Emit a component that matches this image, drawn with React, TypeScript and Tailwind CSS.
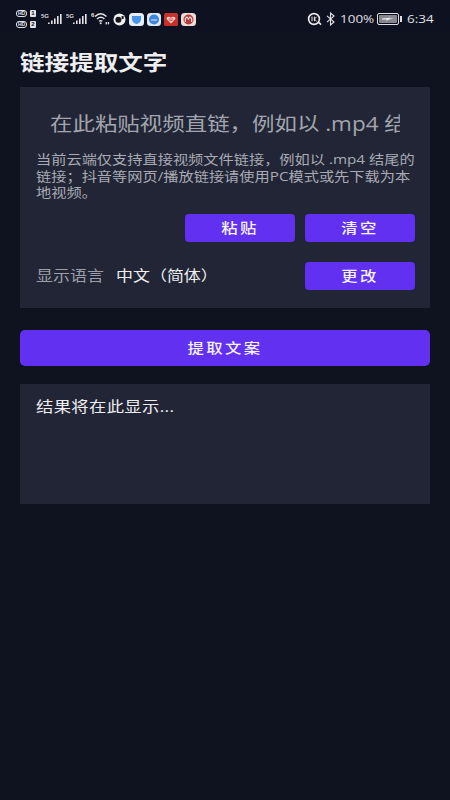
import { useState } from 'react';

const FONT = "font-['Open_Sans','Noto_Sans_CJK_SC',sans-serif]";
// the screenshot is stretched sideways, so the text is too
const WIDE = 'origin-left scale-x-[1.17]';

const HdSim = ({ n }: { n: string }) => (
  <div className="flex items-center gap-[3px] h-[7px]">
    <span className="h-[7px] w-[11px] rounded-[3px] border border-[#e4e4e8] text-[5px] leading-[5px] font-bold text-center text-[#e4e4e8] font-['Liberation_Sans',sans-serif]">
      HD
    </span>
    <span className="h-[7px] w-[6px] rounded-[1px] bg-[#e4e4e8] text-[6px] leading-[7px] font-bold text-center text-[#0f1220] font-['Liberation_Sans',sans-serif]">
      {n}
    </span>
  </div>
);

const Signal = () => (
  <div className="relative w-[21px] h-[12px]">
    <span className="absolute left-0 top-0 text-[6px] leading-[6px] font-bold text-[#d8d8dc] font-['Liberation_Sans',sans-serif]">5G</span>
    <svg className="absolute left-[7px] top-[1px]" width="15" height="11" viewBox="0 0 15 11" fill="#e4e4e8">
      <rect x="0" y="8.5" width="1.6" height="1.5" />
      <rect x="3" y="6.5" width="1.6" height="3.5" />
      <rect x="6" y="4.5" width="1.6" height="5.5" />
      <rect x="9" y="2" width="1.6" height="8" />
      <rect x="12" y="0" width="1.6" height="10" />
    </svg>
  </div>
);

const Wifi = () => (
  <svg width="19" height="14" viewBox="0 0 19 14" fill="none" stroke="#e4e4e8">
    <text x="0" y="5" fontSize="6" fontWeight="700" fill="#e4e4e8" stroke="none" fontFamily="Liberation Sans">6</text>
    <path d="M4 4.5C7.6 1 11.8 1 15.4 4.5" strokeWidth="1.4" />
    <path d="M6 7C8.4 4.8 11 4.8 13.4 7" strokeWidth="1.4" />
    <path d="M8 9.3C9.2 8.4 10.2 8.4 11.4 9.3" strokeWidth="1.4" />
    <circle cx="9.7" cy="11.3" r="1" fill="#e4e4e8" stroke="none" />
    <rect x="14.6" y="10" width="1.3" height="2.4" fill="#e4e4e8" stroke="none" />
    <rect x="16.8" y="10" width="1.3" height="2.4" fill="#e4e4e8" stroke="none" />
  </svg>
);

const AppIcons = () => (
  <div className="flex items-center">
    <svg width="13" height="13" viewBox="0 0 13 13">
      <circle cx="6.5" cy="6.5" r="6" fill="#f1f1f1" />
      <circle cx="5.4" cy="6.8" r="3" fill="#15171f" />
      <rect x="8.6" y="3" width="2" height="3" fill="#15171f" />
    </svg>
    <svg className="ml-[3px]" width="15" height="13" viewBox="0 0 15 13">
      <rect width="15" height="13" rx="3.5" fill="#e6edf7" />
      <path d="M3 3H12V6.5C12 9 9.5 10.4 7.5 11C5.5 10.4 3 9 3 6.5Z" fill="#4a94ea" />
    </svg>
    <svg className="ml-[3px]" width="14" height="13" viewBox="0 0 14 13">
      <rect width="14" height="13" rx="3.5" fill="#dfe8f5" />
      <circle cx="7" cy="6.5" r="5" fill="#3d85dc" />
      <path d="M4 7H10" stroke="#dfe8f5" strokeWidth="1" />
    </svg>
    <svg className="ml-[3px]" width="14" height="13" viewBox="0 0 14 13">
      <rect width="14" height="13" rx="1.5" fill="#c9302c" />
      <path d="M7 10.5L2.8 6.3C1.8 4.6 4.6 2.6 7 4.8C9.4 2.6 12.2 4.6 11.2 6.3Z" fill="#f4d6d0" />
      <path d="M4.5 6H9.5M5.5 7.6H8.5" stroke="#c9302c" strokeWidth="0.8" />
    </svg>
    <svg className="ml-[3px]" width="15" height="13" viewBox="0 0 15 13">
      <rect width="15" height="13" rx="3.5" fill="#ecdcdc" />
      <circle cx="7.5" cy="6.5" r="5" fill="#b73a3a" />
      <path d="M4.3 9V5.6L6 4L7.5 6L9 4L10.7 5.6V9" fill="none" stroke="#f3e4e4" strokeWidth="1.1" />
    </svg>
  </div>
);

const StatusBar = () => (
  <div className="h-[32px] bg-[#0e1120] flex items-center justify-between pl-[16px] pr-[16px] pt-[6px] text-[#e0e0e4]">
    <div className="flex items-center">
      <div className="flex flex-col gap-[4px] w-[25px]">
        <HdSim n="1" />
        <HdSim n="2" />
      </div>
      <Signal />
      <div className="ml-[4px]">
        <Signal />
      </div>
      <div className="ml-[4px]">
        <Wifi />
      </div>
      <div className="ml-[3px]">
        <AppIcons />
      </div>
    </div>
    <div className="flex items-center">
      <svg width="15" height="14" viewBox="0 0 15 14" fill="none" stroke="#eeeef0">
        <circle cx="7" cy="7" r="5.4" strokeWidth="1.6" />
        <path d="M5 4.6V9.2M7.4 4.6V9.2M7.4 7L9.6 4.8M7.4 7L9.6 9.2" strokeWidth="1" />
        <path d="M11.8 10.4L14 12.6" strokeWidth="1.5" />
      </svg>
      <svg className="ml-[4px]" width="9" height="14" viewBox="0 0 9 14" fill="none" stroke="#e4e4e8" strokeWidth="1.1">
        <path d="M1 3.8L8 10L4.5 13V1L8 4L1 10.2" />
      </svg>
      <span className={`ml-[5px] w-[34px] text-[11.5px] leading-[14px] ${WIDE}`}>100%</span>
      <div className="ml-[3px] flex items-center">
        <div className="w-[22px] h-[12px] rounded-[2px] border border-[#e0e0e4] p-[1px]">
          <div className="h-full rounded-[1px] bg-[#85868e] flex items-center justify-center">
            <svg width="12" height="6" viewBox="0 0 12 6" fill="#f2f2f2">
              <path d="M0 2.4L6.6 2L7.6 0L7.2 2.4H12L5.4 4L4.4 6L4.8 3.6H0Z" />
            </svg>
          </div>
        </div>
        <span className="ml-[1px] w-[2px] h-[6px] bg-[#e0e0e4]" />
      </div>
      <span className={`ml-[5px] w-[27px] text-[11.5px] leading-[14px] ${WIDE}`}>6:34</span>
    </div>
  </div>
);

const ActionButton = ({ label, onClick }: { label: string; onClick?: () => void }) => (
  <button
    onClick={onClick}
    className="w-[110px] h-[28px] rounded-[4px] bg-[#6130f0] text-[#f4f2fe] text-[14px] leading-[28px] font-medium text-center"
  >
    <span className="inline-block scale-x-[1.17] tracking-[2px]">{label}</span>
  </button>
);

export default function App() {
  const [url, setUrl] = useState('');

  return (
    <div className={`min-h-[800px] bg-[#0f1320] ${FONT}`}>
      <StatusBar />
      <div className="px-[20px]">
        <h1 className={`mt-[14px] h-[32px] w-fit text-[21px] leading-[32px] font-bold text-[#eeeef0] ${WIDE}`}>链接提取文字</h1>

        <div className="mt-[9px] h-[221px] bg-[#212536] px-[16px]">
          <input
            value={url}
            onChange={(e) => setUrl(e.target.value)}
            placeholder="在此粘贴视频直链，例如以 .mp4 结尾的链接"
            className={`mt-[21px] ml-[14px] w-[299px] h-[32px] bg-transparent outline-none text-[19.2px] leading-[32px] text-[#a3a5ae] placeholder:text-[#a3a5ae] ${WIDE}`}
          />
          <p className={`mt-[11px] w-[325px] text-[13px] leading-[16.5px] text-[#a9abb4] ${WIDE}`}>
            当前云端仅支持直接视频文件链接，例如以 .mp4 结尾的链接；抖音等网页/播放链接请使用PC模式或先下载为本地视频。
          </p>
          <div className="mt-[13px] flex justify-end gap-[10px] -mr-px">
            <ActionButton label="粘贴" />
            <ActionButton label="清空" onClick={() => setUrl('')} />
          </div>
          <div className="mt-[20px] flex items-center -mr-px">
            <span className={`w-[68px] whitespace-nowrap text-[14.5px] leading-[20px] text-[#9c9ea8] ${WIDE}`}>显示语言</span>
            <span className={`ml-[12px] whitespace-nowrap text-[14.5px] leading-[20px] text-[#eeeef0] ${WIDE}`}>中文（简体）</span>
            <div className="ml-auto">
              <ActionButton label="更改" />
            </div>
          </div>
        </div>

        <button className="mt-[22px] w-full h-[36px] rounded-[5px] bg-[#6130f0] text-[#f4f2fe] text-[14px] leading-[36px] font-medium">
          <span className="inline-block scale-x-[1.17] tracking-[2px]">提取文案</span>
        </button>

        <div className="mt-[18px] h-[120px] bg-[#212536] px-[16px] pt-[12px]">
          <p className={`w-fit text-[14.8px] leading-[20px] tracking-[0.3px] text-[#eeeef0] ${WIDE}`}>结果将在此显示...</p>
        </div>
      </div>
    </div>
  );
}
